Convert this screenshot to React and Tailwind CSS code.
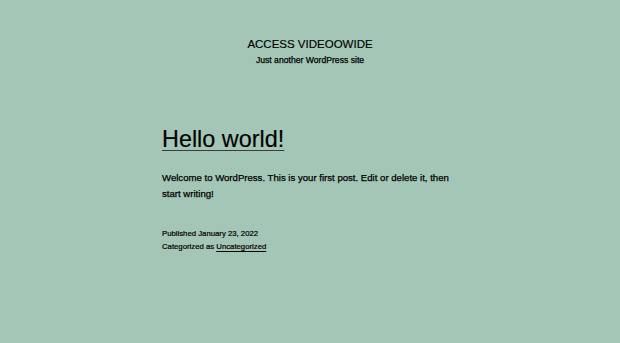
import React from 'react';

/* Blog index: site header + single post excerpt */
const App = () => {
  return (
    <div className="min-h-screen w-full bg-[#a3c6b6] text-black" style={{ fontFamily: '"Liberation Sans", Arial, sans-serif' }}>
      {/* ── Site header ── */}
      <header className="flex flex-col items-center pt-[37px]">
        <p className="text-[11.5px] leading-[15px] uppercase [-webkit-text-stroke:0.15px_black]">Access Videoowide</p>
        <p className="mt-[2px] text-[8.64px] leading-[12px] [-webkit-text-stroke:0.25px_black]">Just another WordPress site</p>
      </header>

      {/* ── Post ── */}
      <main className="mx-auto mt-[58px] w-[296px]">
        <h2 className="text-[23.4px] leading-[30px] [-webkit-text-stroke:0.15px_black]">
          <a href="#" className="underline decoration-[1px] decoration-[#3a3f3d] underline-offset-[3px]">
            Hello world!
          </a>
        </h2>

        <p className="mt-[15.5px] text-[9.6px] leading-[16.3px] [-webkit-text-stroke:0.25px_black]">
          Welcome to WordPress. This is your first post. Edit or delete it, then start writing!
        </p>

        <footer className="mt-[25px] text-[7.75px] leading-[13px] [-webkit-text-stroke:0.2px_black]">
          <p>Published January 23, 2022</p>
          <p>
            Categorized as{' '}
            <a href="#" className="underline decoration-[1px] underline-offset-[2px]">Uncategorized</a>
          </p>
        </footer>
      </main>
    </div>
  );
};

export default App;
